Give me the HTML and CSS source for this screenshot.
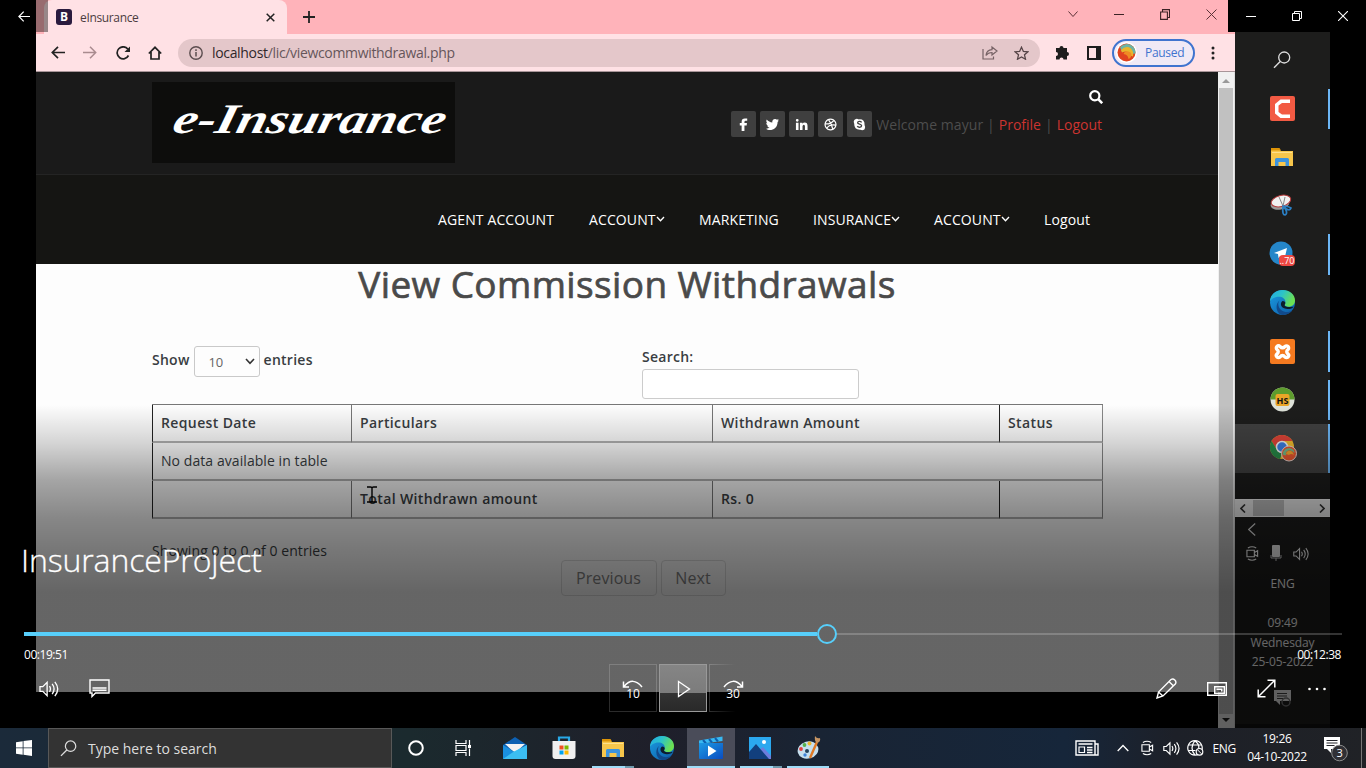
FILE: index.html
```html
<!DOCTYPE html>
<html lang="en">
<head>
<meta charset="utf-8">
<title>InsuranceProject</title>
<link rel="stylesheet" href="styles.css">
</head>
<body>
<svg class="defs" width="0" height="0">
  <defs>
    <linearGradient id="edgeBlue" x1="0" y1="0" x2="1" y2="1"><stop offset="0" stop-color="#1b9de2"/><stop offset="1" stop-color="#0c59a4"/></linearGradient>
    <linearGradient id="edgeGreen" x1="0" y1="0" x2="1" y2="0.4"><stop offset="0" stop-color="#21a9e6"/><stop offset=".5" stop-color="#2cc3c9"/><stop offset="1" stop-color="#6ce052"/></linearGradient>
    <linearGradient id="film" x1="0" y1="0" x2="1" y2="1"><stop offset="0" stop-color="#1c9be4"/><stop offset="1" stop-color="#0a4cc0"/></linearGradient>
    <symbol id="edge" viewBox="0 0 24 24">
      <circle cx="12" cy="12" r="12" fill="url(#edgeBlue)"/>
      <path d="M0 11C0 4 6 0 12 0c7 0 12 4.500 12 10 0 4-3 6-6 6-2.500 0-4-.8-4-1.800 0-.7.8-1 .8-2.700C14.800 8.500 12 6.500 8.500 6.500 4 6.500 1 9 0 11z" fill="url(#edgeGreen)"/>
      <path d="M9 10c-2 3-1 7 2 9.500s8 2 10.500 0C19 23 15 24.500 11 23.800 6 22 4.500 14 9 10z" fill="#114a8b"/>
      <path d="M12 10.500c2 0 3 1.200 2.700 2.500-.2.800-.9 1.300-.5 2 .9 1.300 3.600 1.600 8.300 1-1 2.500-9 3.500-11.500-.4-1-1.900-.6-4 1-5.100z" fill="#0d1c2c"/>
    </symbol>
    <symbol id="folder" viewBox="0 0 22 18">
      <path d="M0 1h8l2 2h12v15H0z" fill="#f7c64b"/><path d="M0 0h8.500l1.500 2.500H0z" fill="#dd9407"/><path d="M1 4h20v1H1z" fill="#ffe08a"/>
      <path d="M4 11.500Q4 10 5.500 10h11Q18 10 18 11.500V18h-3.500v-4h-7v4H4z" fill="#3c93dd"/>
    </symbol>
    <symbol id="sound" viewBox="0 0 22 18">
      <path d="M1 6.500h3L8.500 2v14L4 11.500H1zM11 6q2 3 0 6M13.800 3.700q4 5.300 0 10.600M16.600 1.500q6 7.500 0 15" fill="none" stroke="currentColor" stroke-width="1.400"/>
    </symbol>
    <symbol id="meet" viewBox="0 0 14 16">
      <path d="M1 4.500h8v7H1zM9 7l3.500-2v6L9 9M2 2q4.500-2.500 9 0M2 14q4.500 2.500 9 0" fill="none" stroke="currentColor" stroke-width="1.200"/>
    </symbol>
    <symbol id="lens" viewBox="0 0 18 18">
      <circle cx="11.200" cy="6.500" r="5.500" fill="none" stroke="currentColor" stroke-width="1.300"/><path d="M7.200 10.500L1 16.800" stroke="currentColor" stroke-width="1.400"/>
    </symbol>
  </defs>
</svg>
<main class="desktop">
  <section class="player">
    <div class="video">
      <div class="browser">
        <div class="tabstrip">
          <div class="tab">
            <span class="favicon">B</span><span class="tab-title">eInsurance</span>
            <svg class="tab-close" width="9" height="9" viewBox="0 0 9 9"><path d="M.7.700l7.600 7.600M8.300.700L.7 8.300" stroke="#222" stroke-width="1.500"/></svg>
          </div>
          <svg class="newtab" width="12" height="12" viewBox="0 0 12 12"><path d="M6 0v12M0 6h12" stroke="#222" stroke-width="1.800"/></svg>
          <div class="wincontrols">
            <svg width="10" height="10" viewBox="0 0 10 10"><path d="M.5 2.500L5 7.500l4.500-5" fill="none" stroke="#5b3338"/></svg>
            <svg width="10" height="10" viewBox="0 0 10 10"><path d="M0 5.500h10" stroke="#3c2225"/></svg>
            <svg width="10" height="11" viewBox="0 0 10 11"><path d="M.6 3h6.800v7.400H.6zM2.500 3V.600h7v7.900H7.500" fill="none" stroke="#3c2225" stroke-width="1.100"/></svg>
            <svg width="11" height="11" viewBox="0 0 11 11"><path d="M.5.500l10 10M10.500.500l-10 10" stroke="#5b3338"/></svg>
          </div>
        </div>
        <div class="toolbar">
          <svg class="tool" width="14" height="13" viewBox="0 0 14 13"><path d="M14 6.500H1.500M7 .800L1.300 6.500 7 12.200" fill="none" stroke="#222" stroke-width="1.700"/></svg>
          <svg class="tool" width="14" height="13" viewBox="0 0 14 13"><path d="M0 6.500h12.500M7 .800l5.700 5.700L7 12.200" fill="none" stroke="#a98b8f" stroke-width="1.500"/></svg>
          <svg class="tool" width="15" height="14" viewBox="0 0 15 14"><path d="M12.500 9.500A6 6 0 1 1 11.800 3" fill="none" stroke="#222" stroke-width="1.700"/><path d="M14 .500v5.500H8.500z" fill="#222"/></svg>
          <svg class="tool" width="14" height="14" viewBox="0 0 14 14"><path d="M.8 7.500L7 1.300l6.200 6.200M3 6v7h8V6" fill="none" stroke="#222" stroke-width="1.700"/></svg>
          <div class="address">
            <svg width="14" height="14" viewBox="0 0 14 14"><circle cx="7" cy="7" r="6.200" fill="none" stroke="#5b4d4f" stroke-width="1.400"/><path d="M7 6v4.500M7 3.200v1.700" stroke="#5b4d4f" stroke-width="1.500"/></svg>
            <span class="url">localhost<i>/lic/viewcommwithdrawal.php</i></span>
            <svg class="share" width="16" height="15" viewBox="0 0 16 15"><path d="M1 4v10h10.500v-2.500M4 10.500Q4.500 5 10 4.700V2l5 4-5 4V7.500Q6 7.500 4 10.500z" fill="none" stroke="#766265" stroke-width="1.200"/></svg>
            <svg width="15" height="14" viewBox="0 0 15 14"><path d="M7.500 1.200l1.900 4.200 4.500.4-3.400 3 1 4.400-4-2.300-4 2.300 1-4.400-3.400-3 4.500-.4z" fill="none" stroke="#554447" stroke-width="1.300"/></svg>
          </div>
          <svg class="puzzle" width="15" height="15" viewBox="0 0 15 15"><path d="M1 3h3.500a2 2 0 1 1 4 0H12v4a2 2 0 1 1 0 4v3.500H8.500a2 2 0 0 0-4 0H1V11a2 2 0 0 0 0-4z" fill="#1d1d1d"/></svg>
          <svg class="panel" width="14" height="14" viewBox="0 0 14 14"><path d="M1 1h12v12H1zM10 1v12M11.500 1v12" fill="none" stroke="#1d1d1d" stroke-width="2"/></svg>
          <div class="paused"><svg width="21" height="21" viewBox="0 0 21 21"><circle cx="10.500" cy="10.500" r="10.500" fill="#fff"/><circle cx="10.500" cy="10.500" r="9" fill="#e0421f"/><path d="M4 5Q9 0 15 3q5 3 4.400 8.500L15 12q-3-5-9-2z" fill="#6cb4a5"/><path d="M5 8q5-5 10-1.500 3 3 2 8l-3-1q-2-6-8-3z" fill="#e9b52b"/><path d="M9 9.500q5-1 6.500 2.500 0 4-3 5-.5-4.500-5-5z" fill="#f08a24"/></svg>Paused</div>
          <svg width="4" height="14" viewBox="0 0 4 14"><g fill="#222"><circle cx="2" cy="2" r="1.500"/><circle cx="2" cy="7" r="1.500"/><circle cx="2" cy="12" r="1.500"/></g></svg>
        </div>
        <div class="viewport">
          <div class="page">
            <header class="site-head">
              <div class="logo"><svg width="303" height="81" viewBox="0 0 303 81"><text transform="translate(0 51) skewX(-14)" x="19" y="0" textLength="272" lengthAdjust="spacingAndGlyphs">e-Insurance</text></svg></div>
              <div class="account">
                <svg class="search" width="14" height="14" viewBox="0 0 14 14"><circle cx="5.800" cy="5.800" r="4.600" fill="none" stroke="#fff" stroke-width="2.200"/><path d="M9.200 9.200l4 4" stroke="#fff" stroke-width="2.600"/></svg>
                <div class="links">
                  <span class="social"><svg viewBox="0 0 14 14"><path d="M5 14V8H3V5.500h2V4q0-3.500 3.500-3.500H11V3H9.300Q8 3 8 4.200v1.300h2.700L10.400 8H8v6z"/></svg></span>
                  <span class="social"><svg viewBox="0 0 14 14"><path d="M14 2.800l-1.500 1.400C12.500 10 8 13 4.200 12.900 2.500 12.900 1 12.300 0 11.500c1.500.1 3-.3 4-1.200-1.300-.1-2.300-1-2.600-2h1.200C1.200 7.900.3 6.800.3 5.300l1.200.4C.3 4.600 0 3.200.8 1.700c1.600 1.900 3.600 3 6 3.100C6.400 2.800 7.800 1 9.800 1c.8 0 1.500.3 2 .9l1.800-.7-1 1.700z"/></svg></span>
                  <span class="social"><svg viewBox="0 0 14 14"><path d="M1 5h2.800v8H1zM2.400 1a1.500 1.500 0 1 1 0 3 1.500 1.500 0 0 1 0-3zM5.300 5H8v1.200Q8.800 4.800 10.500 4.800q3 0 3 3.700V13h-2.800V9q0-1.800-1.200-1.800T8.100 9v4H5.300z"/></svg></span>
                  <span class="social"><svg viewBox="0 0 14 14"><path d="M7 1.200a5.800 5.800 0 1 0 .01 0M4.800 1.700Q8.500 6 9.500 12.300M1.500 6.400q6 .3 9-3.900M2.900 11.200q3-5 9.700-3.500" fill="none" stroke="#fff" stroke-width="1.300"/></svg></span>
                  <span class="social"><svg viewBox="0 0 14 14"><path d="M4 .700q1.500 0 2.300.8Q12.700.900 12.500 7.700 13.900 10 12.500 12q-2.200 2-4.500.7Q1.200 13 1.300 6.300.2 4 1.400 2.200 2.400.800 4 .700z"/><path d="M9.300 4.800C8 3 4.800 3.600 5 5.200c.2 1.800 4.300 1 4.300 3.200C9.200 10.500 5.500 10.400 4.600 8.800" fill="none" stroke="#3f3f3f" stroke-width="1.400"/></svg></span>
                  <span class="welcome">Welcome mayur |</span><a>Profile</a><span class="bar">|</span><a>Logout</a>
                </div>
              </div>
            </header>
            <nav class="site-nav">
              <a class="n1">AGENT ACCOUNT</a>
              <a class="n2">ACCOUNT<svg viewBox="0 0 9 8"><path d="M1 2l3.500 3.800L8 2"/></svg></a>
              <a class="n3">MARKETING</a>
              <a class="n4">INSURANCE<svg viewBox="0 0 9 8"><path d="M1 2l3.500 3.800L8 2"/></svg></a>
              <a class="n5">ACCOUNT<svg viewBox="0 0 9 8"><path d="M1 2l3.500 3.800L8 2"/></svg></a>
              <a class="n6">Logout</a>
            </nav>
            <h1>View Commission Withdrawals</h1>
            <div class="filters">
              <div class="length">Show <span class="select">10<svg width="10" height="7" viewBox="0 0 10 7"><path d="M1 1l4 4.300L9 1" fill="none" stroke="#333" stroke-width="1.600"/></svg></span> entries</div>
              <label class="find">Search:<input type="text"></label>
            </div>
            <table class="grid">
              <colgroup><col class="c1"><col class="c2"><col class="c3"><col class="c4"></colgroup>
              <tr><th>Request Date</th><th>Particulars</th><th>Withdrawn Amount</th><th>Status</th></tr>
              <tr><td colspan="4">No data available in table</td></tr>
              <tr><th></th><th>Total Withdrawn amount</th><th>Rs. 0</th><th></th></tr>
            </table>
            <p class="info">Showing 0 to 0 of 0 entries</p>
            <div class="pager"><span class="prev">Previous</span><span class="next">Next</span></div>
            <div class="page-end"></div>
          </div>
          <div class="scrollbar"><i class="up"></i><i class="thumb"></i><i class="down"></i></div>
        </div>
      </div>
      <aside class="side">
        <ul class="apps">
          <li><svg width="18" height="18"><use href="#lens"/></svg></li>
          <li class="open"><svg width="25" height="25" viewBox="0 0 25 25"><rect width="25" height="25" rx="2" fill="#f25a43"/><path d="M20 3.500h-9.500L5 8v9.500L10.500 22H20v-3.500h-8L8.500 16V9.500L12 7h8z" fill="#fff"/></svg></li>
          <li><svg width="22" height="18"><use href="#folder"/></svg></li>
          <li><svg width="24" height="23" viewBox="0 0 24 23"><ellipse cx="10" cy="10" rx="9.500" ry="5.500" fill="#999" transform="rotate(-12 10 10)"/><ellipse cx="11" cy="7" rx="10" ry="5.500" fill="#f1f1f1" stroke="#b53a3a" transform="rotate(-15 11 7)"/><path d="M9 3l4 9M15 3l-2 9" stroke="#888"/><path d="M12 12q6 0 9 2-1 4-8-1-1 8 2 8 4-2-2-9" fill="none" stroke="#2a7fc4" stroke-width="1.700"/></svg></li>
          <li class="open"><svg width="26" height="26" viewBox="0 0 26 26"><circle cx="12" cy="12" r="11.500" fill="#2586c9"/><path d="M5 12l13-5-2.500 11-4-3-2 2-.5-4z" fill="#fff"/><rect x="10" y="14" width="16" height="11" rx="4" fill="#ed4843"/><text x="18" y="22.500" class="badge-text">..70</text></svg></li>
          <li><svg width="25" height="25"><use href="#edge"/></svg></li>
          <li class="open"><svg width="25" height="25" viewBox="0 0 25 25"><rect width="25" height="25" rx="2" fill="#f57a20"/><path d="M7 7.500a2 2 0 0 1 3 0q2.500 2.500 5 0a2 2 0 1 1 3 3q-2.500 2 0 4.500a2 2 0 1 1-3 3q-2.500-3-5 0a2 2 0 1 1-3-3q2.500-2.500 0-4.500a2 2 0 0 1 0-3z" fill="none" stroke="#fff" stroke-width="3.400"/></svg></li>
          <li class="open"><svg width="25" height="25" viewBox="0 0 25 25"><circle cx="12.500" cy="12.500" r="12" fill="#dfe3da"/><path d="M.5 12.500a12 12 0 0 1 24 0z" fill="#5d9c2d"/><rect x="5.500" y="7" width="14" height="12" rx="2" fill="#e9a527"/><text x="12.500" y="16.500" class="hs">HS</text></svg></li>
          <li class="open current"><svg width="27" height="27" viewBox="0 0 27 27"><circle cx="12" cy="12" r="12" fill="#f1bc2d"/><path d="M1.600 6A12 12 0 0 1 22.400 6H12L7 15z" fill="#df4338"/><path d="M1.600 6l5.500 9q2 3 5 3l-2 6A12 12 0 0 1 1.600 6z" fill="#278b48"/><circle cx="12" cy="12" r="5.500" fill="#3b7de0" stroke="#eee" stroke-width="1.500"/><circle cx="19" cy="18.500" r="7.500" fill="#e8562f" stroke="#e7d3cc"/><path d="M12.500 19q1-6 7-6 5 1 5 5-4-4-7-2t-1 4q-3 1-4-1z" fill="#75b987"/><path d="M16 19q1-4 5-3 2 1 3 4-3-2-5 0" fill="#f0a52d"/></svg></li>
        </ul>
        <div class="hscroll"><svg width="6" height="9" viewBox="0 0 6 9"><path d="M5 .500l-4 4 4 4"/></svg><i></i><svg width="6" height="9" viewBox="0 0 6 9"><path d="M1 .500l4 4-4 4"/></svg></div>
        <div class="tray">
          <svg class="chev" width="8" height="13" viewBox="0 0 8 13"><path d="M7.200.500l-6.500 6 6.500 6" fill="none" stroke="#ddd" stroke-width="1.200"/></svg>
          <div class="tray-icons">
            <svg width="13" height="15"><use href="#meet"/></svg>
            <svg width="12" height="17" viewBox="0 0 12 17"><rect x="2" width="8" height="12" rx="1" fill="#eee"/><path d="M1 10v3h10v-3M6 13v3" fill="none" stroke="#ccc"/></svg>
            <svg width="17" height="14"><use href="#sound"/></svg>
          </div>
          <span class="t1">ENG</span><span class="t2">09:49</span><span class="t3">Wednesday</span><span class="t4">25-05-2022</span>
          <svg class="note" width="17" height="17" viewBox="0 0 17 17"><path d="M0 0h17v11H6v4l-4-4H0z" fill="#f0f0f0"/><path d="M3 3.500h10M3 6h10M3 8.500h6" stroke="#444"/><circle cx="12" cy="12" r="4" fill="none" stroke="#777" stroke-width="1.500"/></svg>
        </div>
      </aside>
    </div>
    <div class="shade"></div>
    <div class="caption-left"><svg width="12" height="11" viewBox="0 0 12 11"><path d="M12 5.500H1M5.700.700L.9 5.500l4.800 4.800" fill="none" stroke="#fff" stroke-width="1.200"/></svg></div>
    <div class="caption-right">
      <svg width="10" height="10" viewBox="0 0 10 10"><path d="M0 5.500h10" stroke="#fff"/></svg>
      <svg width="10" height="10" viewBox="0 0 10 10"><path d="M.5 2.500h7v7h-7zM2.500 2.500v-2h7v7h-2" fill="none" stroke="#fff"/></svg>
      <svg width="10" height="10" viewBox="0 0 10 10"><path d="M0 0l10 10M10 0L0 10" stroke="#fff" stroke-width="1.100"/></svg>
    </div>
    <div class="controls">
      <div class="video-title">InsuranceProject</div>
      <div class="seek"><div class="played" style="width:793px"></div><div class="knob"></div><div class="remain"></div></div>
      <div class="times"><span>00:19:51</span><span>00:12:38</span></div>
      <div class="buttons">
        <div class="group left">
          <svg width="21" height="18"><use href="#sound"/></svg>
          <svg width="21" height="19" viewBox="0 0 21 19"><path d="M1 1h19v13H6.500L3 17.500V14H1zM3.500 9h14M3.500 11.300h14" fill="none" stroke="#fff" stroke-width="1.400"/></svg>
        </div>
        <div class="group mid">
          <div class="btn back"><svg width="22" height="24" viewBox="0 0 22 24"><path d="M2 8.500Q11-2 20 9M1.500 3.500v5.500H7" fill="none" stroke="#fff" stroke-width="1.500"/><text x="11" y="19.500" class="skip">10</text></svg></div>
          <div class="btn play"><svg width="14" height="18" viewBox="0 0 14 18"><path d="M1.500 1.500L12.500 9l-11 7.500z" fill="none" stroke="#fff" stroke-width="1.300"/></svg></div>
          <div class="btn fwd"><svg width="22" height="24" viewBox="0 0 22 24"><path d="M20 8.500Q11-2 2 9M20.500 3.500v5.500H15" fill="none" stroke="#fff" stroke-width="1.500"/><text x="11" y="19.500" class="skip">30</text></svg></div>
        </div>
        <div class="group right">
          <svg width="21" height="21" viewBox="0 0 21 21"><path d="M1 20l1.500-6L15 1.500q2-1.300 3.800.5t.7 3.700L7 18zM2.500 14L7 18M13 3.500l4.500 4.500" fill="none" stroke="#fff" stroke-width="1.400"/></svg>
          <svg width="20" height="14" viewBox="0 0 20 14"><path d="M.7.700h18.600v12.600H.7z" fill="none" stroke="#fff" stroke-width="1.400"/><path d="M7.700 4.700h9.600v6.600H7.700z" fill="none" stroke="#fff" stroke-width="1.400"/><path d="M9.500 6.500h6v3h-1.500V8H9.500z" fill="#fff"/></svg>
          <svg width="19" height="19" viewBox="0 0 19 19"><path d="M1.500 17.500l16-16M10.500 1.200h7.300v7.300M1.200 10.500v7.300h7.300" fill="none" stroke="#fff" stroke-width="1.500"/></svg>
          <svg width="18" height="4" viewBox="0 0 18 4"><g fill="#fff"><circle cx="1.500" cy="2" r="1.300"/><circle cx="9" cy="2" r="1.300"/><circle cx="16.500" cy="2" r="1.300"/></g></svg>
        </div>
      </div>
    </div>
    <svg class="ibeam" width="10" height="17" viewBox="0 0 10 17"><path d="M0 1h3.500q1.500 0 1.500 1 0-1 1.500-1H10M5 2v13M0 16h3.500Q5 16 5 15q0 1 1.500 1H10" fill="none" stroke="#000" stroke-width="1.400"/></svg>
  </section>
  <footer class="taskbar">
    <div class="start"><svg width="16" height="16" viewBox="0 0 16 16"><path d="M0 2.200L6.700 1.200v6.300H0zM7.500 1.100L16 0v7.500H7.500zM0 8.300h6.700v6.400L0 13.700zM7.500 8.300H16V16l-8.500-1.200z" fill="#fff"/></svg></div>
    <div class="searchbox"><svg width="17" height="17"><use href="#lens"/></svg>Type here to search</div>
    <div class="task cortana"><svg width="16" height="16" viewBox="0 0 16 16"><circle cx="8" cy="8" r="6.800" fill="none" stroke="#fff" stroke-width="2"/></svg></div>
    <div class="task view"><svg width="17" height="16" viewBox="0 0 17 16"><path d="M1 0v3.500h10V0M1 16v-3.500h10V16M1 5.500h10v5H1zM14.500 0v5M14.500 8.500V16" fill="none" stroke="#fff" stroke-width="1.200"/><path d="M13 5h3v3h-3z" fill="#fff"/></svg></div>
    <div class="task"><svg width="24" height="22" viewBox="0 0 24 22"><path d="M0 8l12-8 12 8v5H0z" fill="#0d61b3"/><path d="M2 7h20l-10 9z" fill="#f3f3f3"/><path d="M0 8l14 8.500L24 22H0z" fill="#1a8fdf"/><path d="M24 8v14H0l11-7.500z" fill="#3bbdf2"/></svg></div>
    <div class="task"><svg width="24" height="24" viewBox="0 0 24 24"><path d="M7 7V1.500h10V7" fill="none" stroke="#28a9e8" stroke-width="2.200"/><path d="M.5 5h23v15q0 3-3 3h-17q-3 0-3-3z" fill="#f1f1f1"/><path d="M7.500 9.500h4v4h-4z" fill="#f05122"/><path d="M12.500 9.500h4v4h-4z" fill="#7eba00"/><path d="M7.500 14.500h4v4h-4z" fill="#02a3ee"/><path d="M12.500 14.500h4v4h-4z" fill="#fdb800"/></svg></div>
    <div class="task stack"><svg width="22" height="18"><use href="#folder"/></svg></div>
    <div class="task"><svg width="24" height="24"><use href="#edge"/></svg></div>
    <div class="task active"><svg width="24" height="24" viewBox="0 0 24 24"><path d="M0 4.500L23.500.500v4.500L0 8z" fill="#38b8f2"/><path d="M4 4l3 3.500M10 3l3 3.500M16 2l3 3.500" stroke="#0d5fae" stroke-width="2"/><path d="M0 7h24v15q0 1-1 1H1q-1 0-1-1z" fill="url(#film)"/><path d="M9 9.500v11l8.500-5.500z" fill="#fff"/></svg></div>
    <div class="task stack photos"><svg width="22" height="22" viewBox="0 0 22 22"><path d="M0 0h22v22H0z" fill="#2ba8ef"/><path d="M9 14l5-4 8 9v3H9z" fill="#6d7ddc"/><path d="M0 15l7-8 13 15H0z" fill="#123f7d"/><circle cx="15" cy="5" r="2" fill="#fff"/></svg></div>
    <div class="task run"><svg width="24" height="24" viewBox="0 0 24 24"><ellipse cx="11" cy="14" rx="10.500" ry="8.500" fill="#c5dfee" transform="rotate(-15 11 14)"/><circle cx="10" cy="15" r="2" fill="#23415c"/><circle cx="4" cy="13" r="1.900" fill="#e23e3e"/><circle cx="7.500" cy="9" r="1.900" fill="#54b04d"/><circle cx="12.500" cy="7.500" r="2" fill="#eeb62b"/><circle cx="8" cy="19" r="1.700" fill="#3e83d8"/><path d="M20 6l-7 16" stroke="#e07a25" stroke-width="2.400"/><path d="M18 0q2 3 5 2 1 4-3 5-3-2-2-7z" fill="#c59463"/></svg></div>
    <div class="systray">
      <svg class="news" width="24" height="16" viewBox="0 0 24 16"><path d="M1 1h19v14H1zM20 4h3v11H19" fill="none" stroke="#fff" stroke-width="1.400"/><path d="M3.500 4h14M12 7.500h5.500M12 10h5.500M12 12.500h5.500" stroke="#fff" stroke-width="1.300"/><path d="M4 7h5.500v5.500H4z" fill="none" stroke="#fff" stroke-width="1.200"/></svg>
      <svg class="caret" width="12" height="8" viewBox="0 0 12 8"><path d="M.7 7L6 1.500 11.300 7" fill="none" stroke="#fff" stroke-width="1.300"/></svg>
      <svg class="m" width="13" height="16"><use href="#meet"/></svg>
      <svg class="s" width="18" height="15"><use href="#sound"/></svg>
      <svg class="g" width="17" height="16" viewBox="0 0 17 16"><path d="M8 .700a7.200 7.200 0 1 0 .01 0M8 .700q-6 7.300 0 14.400M8 .700q5 4 3.500 8M1.500 5h13M1.500 10.500h7" fill="none" stroke="#fff" stroke-width="1.200"/><circle cx="12.500" cy="11.800" r="3.300" fill="#20232a" stroke="#fff" stroke-width="1.200"/><path d="M10.500 9.800l4 4" stroke="#fff"/></svg>
      <span class="lang">ENG</span>
      <span class="clock"><span>19:26</span><span>04-10-2022</span></span>
      <svg class="notify" width="26" height="26" viewBox="0 0 26 26"><path d="M1 1h16v12H8v4l-4-4H1z" fill="#fff"/><path d="M3.500 4.500h11M3.500 7h11M3.500 9.500h8" stroke="#23242a"/><circle cx="16.500" cy="17" r="7.800" fill="#303035" stroke="#8c8c8c"/><text x="16.500" y="21" class="count">3</text></svg>
      <i class="peek"></i>
    </div>
  </footer>
</main>
</body>
</html>
```
FILE: styles.css
```css
* { box-sizing: border-box; }
body { margin: 0; background: #000; font-family: "Open Sans", "Noto Sans", sans-serif; }
svg { display: block; flex: none; }
.defs { position: absolute; }
.desktop { width: 1366px; height: 768px; display: flex; flex-direction: column; overflow: hidden; }
.player { position: relative; height: 728px; background: #000; overflow: hidden; }
.video { margin-left: 36px; width: 1294px; height: 728px; display: flex; }
.browser { width: 1199px; display: flex; flex-direction: column; }

.tabstrip { height: 34px; background: #ffb3ba; display: flex; align-items: center; }
.tab { width: 243px; height: 34px; margin-left: 8px; padding-left: 12px; background: #ffe1e5; border-radius: 8px 8px 0 0; display: flex; align-items: center; }
.favicon { width: 16px; height: 16px; border-radius: 3px; background: #2a1a3e; color: #fff; font: bold 12px/16px "Open Sans", sans-serif; text-align: center; }
.tab-title { width: 61px; margin-left: 8px; font-size: 12px; color: #4b3c3f; white-space: nowrap; letter-spacing: -.35px; }
.tab-close { margin-left: 125px; }
.newtab { margin-left: 16px; }
.wincontrols { margin-left: auto; padding: 0 18px 6px 0; display: flex; align-items: center; gap: 36px; }
.toolbar { height: 38px; background: #ffe1e5; border-bottom: 1px solid #a89598; display: flex; align-items: center; padding: 0 18px 0 15px; }
.tool { margin-right: 18px; }
.tool:nth-child(2) { margin-right: 19px; }
.tool:nth-child(3) { margin-right: 17px; }
.tool:nth-child(4) { margin-right: 16px; }
.address { width: 862px; height: 28px; border-radius: 14px; background: #e4c7ca; display: flex; align-items: center; padding: 0 11px; flex: none; }
.url { margin-left: 9px; font-size: 14px; letter-spacing: -.33px; color: #30282a; }
.url i { font-style: normal; color: #66565a; }
.share { margin-left: auto; margin-right: 16px; }
.puzzle { margin-left: 15px; }
.panel { margin-left: 17px; }
.paused { width: 83px; height: 28px; margin: 0 16px 0 11px; border: 2px solid #3f74cf; border-radius: 14px; background: #f0e9f5; color: #3f74cf; font-size: 12px; display: flex; align-items: center; gap: 8px; padding-left: 2px; letter-spacing: -.3px; flex: none; }

.viewport { height: 656px; display: flex; }
.page { width: 1182px; background: #fdfdfd; display: flex; flex-direction: column; color: #393d42; }
.site-head { height: 103px; background: #1a1a1a; border-bottom: 1px solid #242424; padding: 10px 116px 0; display: flex; justify-content: space-between; flex: none; }
.logo { width: 303px; height: 81px; background: #0d0d0c; }
.logo text { font: italic bold 42px "Liberation Serif", serif; fill: #fff; }
.account { display: flex; flex-direction: column; align-items: flex-end; }
.search { margin-top: 8px; margin-right: -1px; }
.links { margin-top: 7px; display: flex; align-items: center; font-size: 14px; color: #4d4d4d; white-space: nowrap; }
.social { width: 25px; height: 26px; margin-right: 4px; border-radius: 2px; background: #3f3f3f; display: flex; align-items: center; justify-content: center; }
.social svg { width: 13px; height: 13px; fill: #fff; }
.links a { color: #cc3430; }
.welcome { margin-right: 4px; letter-spacing: .08px; }
.bar { margin: 0 4px; }
.site-nav { height: 89px; background: #151513; color: #fff; flex: none; display: flex; align-items: center; padding: 0 0 1px 402px; font-size: 14px; letter-spacing: .12px; }
.site-nav a { display: flex; align-items: center; white-space: nowrap; }
.site-nav svg { width: 9px; height: 8px; fill: none; stroke: #fff; stroke-width: 1.3; }
.n1 { width: 151px; } .n2 { width: 110px; } .n3 { width: 114px; } .n4 { width: 121px; } .n5 { width: 110px; }
h1 { margin: 0; height: 44px; text-align: center; font-size: 37px; line-height: 40px; font-weight: 400; letter-spacing: .39px; -webkit-text-stroke: .7px #4a4a4a; color: #4a4a4a; flex: none; }
.filters { margin: 38px 0 0 116px; height: 58px; display: flex; font-size: 14px; font-weight: 600; letter-spacing: .26px; flex: none; }
.length { width: 490px; height: 31px; display: flex; gap: 4px; line-height: 28px; }
.select { width: 66px; height: 31px; border: 1px solid #c9c9c9; border-radius: 3px; font-size: 13px; font-weight: 400; letter-spacing: -.2px; color: #666; display: flex; align-items: center; justify-content: space-between; padding: 0 4px 0 14px; }
.find { display: flex; flex-direction: column; line-height: 21px; gap: 2px; }
.find input { width: 217px; height: 30px; border: 1px solid #ccc; border-radius: 3px; background: #fff; }
.grid { margin-left: 116px; width: 951px; flex: none; table-layout: fixed; border-collapse: separate; border-spacing: 0; font-size: 14px; border: solid #777; border-width: 1.5px 0 0; }
.c1 { width: 199px; } .c2 { width: 361px; } .c3 { width: 287px; } .c4 { width: 104px; }
.grid th, .grid td { height: 38px; padding: 0 8px; text-align: left; font-weight: 600; border: solid #b0b0b0; border-width: 0 0 2px 1px; border-left-color: #777; line-height: 20px; letter-spacing: .38px; }
.grid th:first-child, .grid td:first-child { border-left-color: #222; }
.grid th:last-child { border-left-color: #222; }
.grid th:last-child, .grid td { border-right: 1px solid #888; }
.grid td { font-weight: 400; letter-spacing: .07px; }
.info { margin: 22px 0 0 116px; font-size: 14px; line-height: 20px; letter-spacing: .08px; flex: none; }
.pager { margin: -1px auto 0; padding-left: 32px; display: flex; gap: 4px; font-size: 16px; letter-spacing: .08px; color: #828282; flex: none; }
.pager span { height: 36px; line-height: 34px; border: 1px solid #ddd; border-radius: 4px; text-align: center; }
.prev { width: 96px; } .next { width: 65px; }
.page-end { margin-top: auto; height: 36px; background: #000; flex: none; }
.scrollbar { width: 17px; background: #f0f0f0; border-right: 1px solid #ddd; display: flex; flex-direction: column; align-items: center; }
.up { margin: 7px 0 5px; border: 4px solid transparent; border-top: 0; border-bottom-color: #999; }
.thumb { width: 14px; flex: 1; background: #c1c1c1; }
.down { margin: 4px 0 6px; border: 4px solid transparent; border-bottom: 0; border-top-color: #222; }

.side { width: 95px; background: #1d1d1c; display: flex; flex-direction: column; }
.apps { margin: 36px 0 0; padding: 0; list-style: none; height: 463px; }
.apps li { height: 48.5px; display: flex; align-items: center; justify-content: center; color: #ddd; padding-right: 1px; }
.apps .open { border-image: linear-gradient(transparent 10%, #6cb6f5 10% 90%, transparent 90%) 1; border-width: 0 2px 0 0; border-style: solid; padding: 0 0 0 1px; }
.apps .current { background: #414141; border-image: none; border-color: #6cb6f5; padding-left: 4px; }
.badge-text { font: 9px "Open Sans", sans-serif; fill: #fff; text-anchor: middle; }
.hs { font: bold 9px "Open Sans", sans-serif; fill: #111; text-anchor: middle; }
.hscroll { height: 18px; background: #f0f0f0; border: solid #fafafa; border-width: 1px 0; display: flex; align-items: center; padding: 0 5px; }
.hscroll i { width: 31px; height: 16px; background: #c1c1c1; margin: 0 35px 0 7px; }
.hscroll path { fill: none; stroke: #333; stroke-width: 1.6; }
.tray { flex: 1; display: flex; flex-direction: column; align-items: center; color: #fff; font-size: 12px; line-height: 16px; border-bottom: 4px solid #111; letter-spacing: -.1px; }
.chev { margin: 6px 61px 0 0; }
.tray-icons { margin-top: 9px; display: flex; align-items: center; gap: 11px; padding-right: 10px; height: 17px; }
.t1 { margin-top: 14px; } .t2 { margin-top: 23px; } .t3 { margin-top: 4px; } .t4 { margin-top: 3px; }
.note { margin-top: 20px; }
.shade { position: absolute; inset: 0; background: linear-gradient(rgba(0,0,0,0) 405px, rgba(0,0,0,.16) 443px, rgba(0,0,0,.35) 480px, rgba(0,0,0,.465) 518px, rgba(0,0,0,.53) 550px, rgba(0,0,0,.6) 592px); }
.caption-left { position: absolute; left: 0; top: 0; width: 48px; height: 32px; background: rgba(0,0,0,.4); display: flex; align-items: center; padding-left: 18px; }
.caption-right { position: absolute; left: 1228px; top: 0; width: 138px; height: 32px; background: #000; display: flex; align-items: center; gap: 36px; padding-left: 18px; }
.controls { position: absolute; left: 24px; top: 540px; width: 1318px; color: #fff; }
.video-title { height: 40px; line-height: 40px; margin-left: -3px; font-family: "Open Sans", sans-serif; font-weight: 300; font-size: 32px; letter-spacing: -.12px; -webkit-text-stroke: .3px #fff; }
.seek { margin-top: 44px; height: 20px; display: flex; align-items: center; }
.played { height: 4px; background: #57cffb; }
.knob { width: 20px; height: 20px; border: 2px solid #57cffb; border-radius: 50%; }
.remain { flex: 1; height: 2px; background: rgba(255,255,255,.2); }
.times { margin-top: 2px; height: 18px; display: flex; justify-content: space-between; font-size: 12px; line-height: 18px; letter-spacing: -.45px; padding-right: 1px; }
.buttons { display: flex; height: 48px; align-items: center; }
.group { display: flex; align-items: center; }
.left { width: 585px; padding: 1px 0 0 15px; gap: 29px; }
.mid { gap: 2px; }
.right { margin-left: auto; gap: 30px; padding: 1px 16px 0 0; }
.right svg:nth-child(3) { margin: 0 2px 0 0; }
.btn { width: 48px; height: 48px; display: flex; align-items: center; justify-content: center; border: 1px solid rgba(255,255,255,.17); padding: 3px 1px 0 0; }
.play { background: linear-gradient(#858585, #7c7c7c 28px, #333 28px, #292929); border-color: #999; padding: 2px 0 0 2px; }
.fwd { border-image: linear-gradient(90deg, rgba(255,255,255,.2), transparent 55%) 1; }
.skip { font: 12px "Open Sans", sans-serif; fill: #fff; text-anchor: middle; }
.ibeam { position: absolute; left: 367px; top: 486px; }

.taskbar { height: 40px; display: flex; background: linear-gradient(90deg, #1b2a3a, #1b2a2e 30%, #1f1f2a 48%, #192434 60%, #16263a 78%, #1d2028 86%, #202226); color: #fff; }
.start { width: 48px; display: flex; align-items: center; justify-content: center; }
.searchbox { width: 344px; background: #333; border: 1px solid #585858; display: flex; align-items: center; gap: 11px; padding-left: 11px; font-size: 14px; color: #ddd; }
.task { width: 48px; margin-right: 1.1px; display: flex; align-items: center; justify-content: center; border-bottom: 2px solid transparent; border-top: 2px solid transparent; padding-left: 1px; }
.cortana { padding: 0 1px 0 0; }
.view { padding: 0 3px 0 0; }
.active { background: #4a4c59; border-bottom-color: #9fdcf8; border-top-color: #4a4c59; padding-left: 0; }
.stack { border-image: linear-gradient(90deg, transparent 5px, #9fdcf8 5px 36px, #6f99ac 36px 45px, transparent 45px) 1; border-width: 0 0 2px; border-style: solid; padding: 2px 0 0 2px; }
.photos { padding-left: 0; }
.run { border-image: linear-gradient(90deg, transparent 3px, #9fdcf8 3px 43px, transparent 43px) 1; border-width: 0 0 2px; border-style: solid; padding: 2px 0 0; }
.systray { margin-left: auto; display: flex; align-items: center; font-size: 12px; letter-spacing: -.3px; }
.caret { margin-left: 18px; } .m { margin-left: 12px; } .s { margin-left: 9px; } .g { margin-left: 6px; }
.lang { margin-left: 8px; }
.clock { width: 60px; margin-left: 11px; display: flex; flex-direction: column; align-items: center; line-height: 18px; }
.notify { margin-left: 16px; margin-top: 2px; }
.peek { width: 5px; height: 40px; margin-left: 12px; border-left: 1px solid #777; }
.count { font: 11px "Open Sans", sans-serif; fill: #fff; text-anchor: middle; }
```
